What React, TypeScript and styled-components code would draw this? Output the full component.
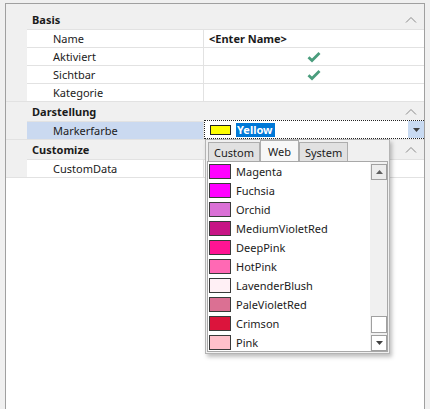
import React from 'react';
import styled, { createGlobalStyle } from 'styled-components';

const FONT = `"Noto Sans", "Segoe UI", sans-serif`;
const PANEL_GRAY = '#f0f0f0';
const GRID_LINE = '#e2e2e2';
const FRAME_LINE = '#a0a0a0';

const GlobalStyle = createGlobalStyle`
  html, body { margin: 0; padding: 0; background: ${PANEL_GRAY}; overflow: hidden; }
  body { font-family: ${FONT}; font-size: 11px; color: #1b1b1b; }
`;

const Frame = styled.div`
  position: relative;
  margin: 3px 0 0 5px;
  width: 418px;
  height: 420px;
  border: 1px solid ${FRAME_LINE};
  border-bottom: none;
  background: #fff;
`;

const TopGap = styled.div`
  height: 6px;
  background: ${PANEL_GRAY};
`;

const Group = styled.div`
  border-bottom: 1px solid ${GRID_LINE};
`;

const CategoryRow = styled.div`
  display: flex;
  align-items: center;
  justify-content: space-between;
  height: 19px;
  padding: 0 7px 0 26px;
  background: ${PANEL_GRAY};
  font-weight: bold;
`;

const PropRow = styled.div`
  display: flex;
  height: 18px;
`;

const Indent = styled.div`
  width: 21px;
  flex: none;
  background: ${PANEL_GRAY};
`;

const NameCell = styled.div<{ selected?: boolean }>`
  width: 177px;
  flex: none;
  display: flex;
  align-items: center;
  padding-left: 26px;
  box-sizing: border-box;
  border-top: 1px solid ${GRID_LINE};
  border-right: 1px solid ${GRID_LINE};
  background: ${(p) => (p.selected ? '#cad9f0' : '#fff')};
`;

const ValueCell = styled.div<{ center?: boolean; bold?: boolean }>`
  flex: 1;
  display: flex;
  align-items: center;
  justify-content: ${(p) => (p.center ? 'center' : 'flex-start')};
  padding-left: ${(p) => (p.center ? '0' : '5px')};
  border-top: 1px solid ${GRID_LINE};
  font-weight: ${(p) => (p.bold ? 'bold' : 'normal')};
`;

const EditorCell = styled.div`
  flex: 1;
  display: flex;
  align-items: center;
  margin-top: -1px;
  height: 19px;
  box-sizing: border-box;
  border: 1px dotted #222;
  border-right: none;
  padding-left: 5px;
  background: #fff;
`;

const MiniSwatch = styled.span`
  width: 19px;
  height: 8px;
  background: #ffff00;
  border: 1px solid #222;
  flex: none;
`;

const SelectedText = styled.span`
  margin-left: 5px;
  padding: 0 2px 0 1px;
  line-height: 14px;
  background: #0078d7;
  color: #fff;
  font-weight: bold;
`;

const DropButton = styled.div`
  margin-left: auto;
  width: 16px;
  height: 17px;
  background: #c8daf2;
  display: flex;
  align-items: center;
  justify-content: center;
`;

const Popup = styled.div`
  position: absolute;
  left: 199px;
  top: 135px;
  width: 183px;
  height: 213px;
  border: 1px solid #b4b4b4;
  background: ${PANEL_GRAY};
  box-shadow: 2px 3px 4px rgba(0, 0, 0, 0.25);
  display: flex;
  flex-direction: column;
`;

const TabStrip = styled.div`
  display: flex;
  align-items: flex-end;
  height: 21px;
  padding-left: 2px;
`;

const Tab = styled.div<{ active?: boolean }>`
  display: flex;
  align-items: center;
  justify-content: center;
  box-sizing: border-box;
  height: ${(p) => (p.active ? '22px' : '20px')};
  padding: 0 ${(p) => (p.active ? '7px' : '5px')};
  margin-bottom: -1px;
  border: 1px solid #adadad;
  border-bottom: ${(p) => (p.active ? 'none' : '1px solid #adadad')};
  background: ${(p) => (p.active ? '#f7f7f7' : '#e1e1e1')};
  font-size: 11px;
`;

const ListBox = styled.div`
  flex: 1;
  margin: 0 1px 1px 1px;
  border: 1px solid #a8a8a8;
  background: #fff;
  display: flex;
  overflow: hidden;
`;

const Items = styled.div`
  flex: 1;
`;

const Item = styled.div`
  display: flex;
  align-items: center;
  height: 19px;
  padding-left: 1px;
  font-size: 11px;
`;

const Swatch = styled.span<{ color: string }>`
  width: 20px;
  height: 13px;
  flex: none;
  margin-right: 5px;
  border: 1px solid #3a3a3a;
  background: ${(p) => p.color};
`;

const ScrollBar = styled.div`
  width: 17px;
  flex: none;
  background: ${PANEL_GRAY};
  display: flex;
  flex-direction: column;
  padding: 2px 0 0 1px;
  box-sizing: border-box;
`;

const ScrollButton = styled.div`
  width: 14px;
  height: 14px;
  border: 1px solid #a0a0a0;
  background: #ececec;
  display: flex;
  align-items: center;
  justify-content: center;
`;

const Thumb = styled.div`
  width: 14px;
  height: 15px;
  margin-top: auto;
  margin-bottom: 2px;
  border: 1px solid #a0a0a0;
  background: #fff;
`;

const DownButton = styled(ScrollButton)`
  background: #fff;
`;

const Chevron = () => (
  <svg width="12" height="7" viewBox="0 0 12 7">
    <polyline points="1,6.5 6,1.5 11,6.5" fill="none" stroke="#8a8a8a" strokeWidth="1" />
  </svg>
);

const Check = () => (
  <svg width="14" height="12" viewBox="0 0 14 12">
    <path d="M1.5 6.2 L5 9.6 L12.5 2" fill="none" stroke="#4a9d7d" strokeWidth="2.8" />
  </svg>
);

const Triangle = ({ up }: { up?: boolean }) => (
  <svg width="7" height="4" viewBox="0 0 7 4">
    <polygon points={up ? '0,4 3.5,0 7,4' : '0,0 7,0 3.5,4'} fill={up ? '#606060' : '#404040'} />
  </svg>
);

const colors: [string, string][] = [
  ['Magenta', '#ff00ff'],
  ['Fuchsia', '#ff00ff'],
  ['Orchid', '#da70d6'],
  ['MediumVioletRed', '#c71585'],
  ['DeepPink', '#ff1493'],
  ['HotPink', '#ff69b4'],
  ['LavenderBlush', '#fff0f5'],
  ['PaleVioletRed', '#db7093'],
  ['Crimson', '#dc143c'],
  ['Pink', '#ffc0cb'],
];

export default function App() {
  return (
    <>
      <GlobalStyle />
      <Frame>
        <TopGap />
        <Group>
          <CategoryRow>
            <span>Basis</span>
            <Chevron />
          </CategoryRow>
          <PropRow>
            <Indent />
            <NameCell>Name</NameCell>
            <ValueCell bold>&lt;Enter Name&gt;</ValueCell>
          </PropRow>
          <PropRow>
            <Indent />
            <NameCell>Aktiviert</NameCell>
            <ValueCell center>
              <Check />
            </ValueCell>
          </PropRow>
          <PropRow>
            <Indent />
            <NameCell>Sichtbar</NameCell>
            <ValueCell center>
              <Check />
            </ValueCell>
          </PropRow>
          <PropRow>
            <Indent />
            <NameCell>Kategorie</NameCell>
            <ValueCell />
          </PropRow>
        </Group>
        <Group>
          <CategoryRow>
            <span>Darstellung</span>
            <Chevron />
          </CategoryRow>
          <PropRow>
            <Indent />
            <NameCell selected>Markerfarbe</NameCell>
            <EditorCell>
              <MiniSwatch />
              <SelectedText>Yellow</SelectedText>
              <DropButton>
                <Triangle />
              </DropButton>
            </EditorCell>
          </PropRow>
        </Group>
        <Group>
          <CategoryRow>
            <span>Customize</span>
            <Chevron />
          </CategoryRow>
          <PropRow>
            <Indent />
            <NameCell>CustomData</NameCell>
            <ValueCell />
          </PropRow>
        </Group>

        <Popup>
          <TabStrip>
            <Tab>Custom</Tab>
            <Tab active>Web</Tab>
            <Tab>System</Tab>
          </TabStrip>
          <ListBox>
            <Items>
              {colors.map(([name, c]) => (
                <Item key={name}>
                  <Swatch color={c} />
                  {name}
                </Item>
              ))}
            </Items>
            <ScrollBar>
              <ScrollButton>
                <Triangle up />
              </ScrollButton>
              <Thumb />
              <DownButton>
                <Triangle />
              </DownButton>
            </ScrollBar>
          </ListBox>
        </Popup>
      </Frame>
    </>
  );
}
